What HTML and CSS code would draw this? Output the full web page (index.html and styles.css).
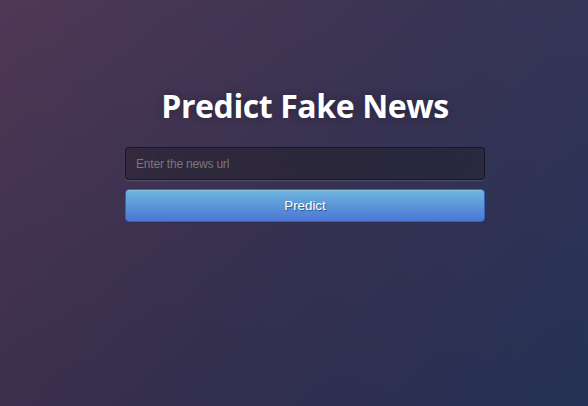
FILE: index.html
```html
<!DOCTYPE html>
<html>
<head>
<meta charset="utf-8">
<link rel="stylesheet" href="styles.css">
</head>
<body>
<div class="page">
  <div class="login">
    <h1 class="title">Predict Fake News</h1>
    <form class="form">
      <input class="field" type="text" placeholder="Enter the news url">
      <button class="btn" type="button">Predict</button>
    </form>
  </div>
</div>
</body>
</html>
```
FILE: styles.css
```css
html, body {
  margin: 0;
  padding: 0;
  height: 100%;
  overflow: hidden;
}
body {
  background:
    linear-gradient(180deg, rgba(255,255,255,0.02) 0%, rgba(0,0,0,0.04) 100%),
    linear-gradient(125deg, #4b3452 0%, #363050 50%, #263359 100%);
  font-family: "Open Sans", sans-serif;
}
.page {
  padding-top: 84px;
}
.login {
  width: 360px;
  margin-left: calc(50% - 169px);
  display: flex;
  flex-direction: column;
}
.title {
  margin: 0 0 20px 0;
  font-size: 32px;
  font-weight: 700;
  line-height: normal;
  color: #fff;
  text-align: center;
  letter-spacing: -0.4px;
  text-shadow: 0 0 10px rgba(0,0,0,0.3);
}
.form {
  display: flex;
  flex-direction: column;
  gap: 9px;
  margin: 0;
}
.field {
  box-sizing: border-box;
  width: 100%;
  height: 33px;
  padding: 0 10px;
  background: rgba(0,0,0,0.3);
  border: 1px solid rgba(0,0,0,0.35);
  border-radius: 4px;
  outline: none;
  font-family: "Liberation Sans", Arial, sans-serif;
  font-size: 12px;
  letter-spacing: -0.2px;
  color: #fff;
  box-shadow: inset 0 -5px 45px rgba(100,100,100,0.15), 0 1px 1px rgba(255,255,255,0.15);
}
.field::placeholder {
  color: #7b7680;
}
.btn {
  box-sizing: border-box;
  width: 100%;
  height: 33px;
  padding: 0;
  border: 1px solid #3762bc;
  border-radius: 4px;
  background: linear-gradient(180deg, #6eb6de 0%, #4a77d4 100%);
  color: #fff;
  font-family: "Liberation Sans", Arial, sans-serif;
  font-size: 13.33px;
  text-shadow: 1px 1px 1px rgba(0,0,0,0.4);
  cursor: pointer;
  box-shadow: inset 0 1px 0 rgba(255,255,255,0.2), 0 1px 2px rgba(0,0,0,0.05);
}
```
